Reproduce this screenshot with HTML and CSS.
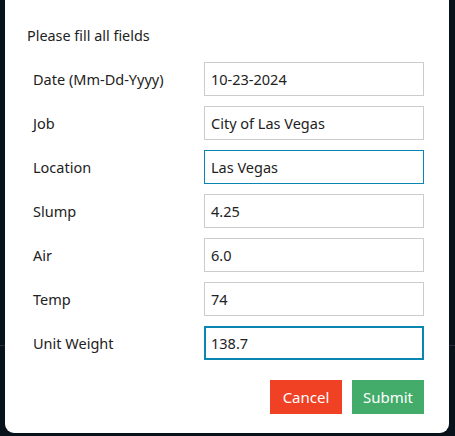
FILE: index.html
```html
<!DOCTYPE html>
<html>
<head>
<meta charset="utf-8">
<link rel="stylesheet" href="styles.css">
</head>
<body>
<div class="modal">
  <p class="intro">Please fill all fields</p>
  <form class="fields">
    <label class="lbl" for="f-date">Date (Mm-Dd-Yyyy)</label>
    <input class="inp" id="f-date" value="10-23-2024">
    <label class="lbl" for="f-job">Job</label>
    <input class="inp" id="f-job" value="City of Las Vegas">
    <label class="lbl" for="f-loc">Location</label>
    <input class="inp inp-hover" id="f-loc" value="Las Vegas">
    <label class="lbl" for="f-slump">Slump</label>
    <input class="inp" id="f-slump" value="4.25">
    <label class="lbl" for="f-air">Air</label>
    <input class="inp" id="f-air" value="6.0">
    <label class="lbl" for="f-temp">Temp</label>
    <input class="inp" id="f-temp" value="74">
    <label class="lbl" for="f-uw">Unit Weight</label>
    <input class="inp inp-focus" id="f-uw" value="138.7">
  </form>
  <div class="actions">
    <button class="btn btn-cancel" type="button">Cancel</button>
    <button class="btn btn-submit" type="button">Submit</button>
  </div>
</div>
</body>
</html>
```
FILE: styles.css
```css
html, body {
  margin: 0;
  padding: 0;
}
body {
  width: 455px;
  height: 436px;
  overflow: hidden;
  background:
    linear-gradient(to bottom, transparent 345px, #2e2a3e 345px, #2e2a3e 346px, transparent 346px),
    #08121b;
  font-family: "Noto Sans", "Open Sans", sans-serif;
  color: #222222;
}
.modal {
  margin-left: 5px;
  width: 444px;
  height: 433px;
  box-sizing: border-box;
  background: #ffffff;
  border-radius: 0 0 9px 9px;
  padding: 26px 25px 0 22px;
}
.intro {
  margin: 0 0 16px 0;
  font-size: 14.4px;
  line-height: 20px;
}
.fields {
  display: grid;
  grid-template-columns: 177px 220px;
  row-gap: 10px;
  align-items: center;
}
.lbl {
  padding-left: 6px;
  font-size: 14.5px;
  line-height: 20px;
}
.inp {
  box-sizing: border-box;
  width: 220px;
  height: 34px;
  margin: 0;
  border: 1px solid #cccccc;
  border-radius: 0;
  padding: 0 6px;
  font-family: inherit;
  font-size: 14.5px;
  color: #222222;
  background: #ffffff;
  outline: none;
}
.inp-hover {
  border-color: #0a86b3;
}
.inp-focus {
  border: 2px solid #0a86b3;
  padding-left: 5px;
}
.actions {
  display: flex;
  justify-content: flex-end;
  gap: 10px;
  margin-top: 20px;
}
.btn {
  width: 72px;
  height: 34px;
  border: 0;
  padding: 0;
  font-family: inherit;
  font-size: 15px;
  color: #ffffff;
}
.btn-cancel {
  background: #f04124;
}
.btn-submit {
  background: #43ac6a;
}
```
